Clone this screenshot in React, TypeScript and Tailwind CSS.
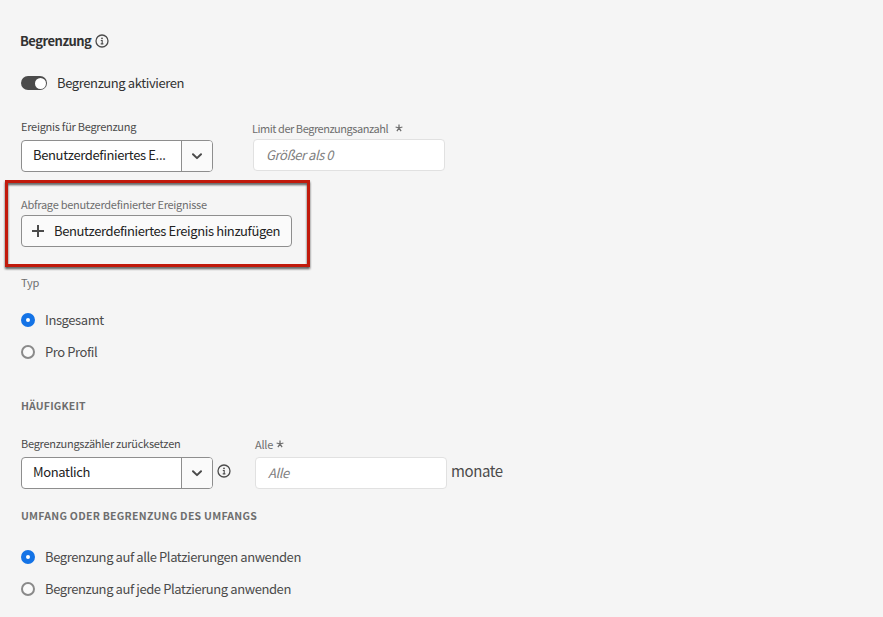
import type { ReactNode } from "react";

function InfoIcon() {
  return (
    <svg width="14" height="14" viewBox="0 0 14 14" fill="none" className="shrink-0">
      <circle cx="7" cy="7" r="6" stroke="#4b4b4b" strokeWidth="1.3" />
      <circle cx="7" cy="4.3" r="0.9" fill="#4b4b4b" />
      <path d="M5.8 6.5H7.2V9.8M5.7 9.9H8.4" stroke="#4b4b4b" strokeWidth="1.1" />
    </svg>
  );
}

function Asterisk() {
  return (
    <svg width="8" height="8" viewBox="0 0 8 8" fill="none" className="shrink-0">
      <path d="M4 4V0.5M4 4L0.6 3M4 4L7.4 3M4 4L1.9 7.2M4 4L6.1 7.2" stroke="#6e6e6e" strokeWidth="1.3" />
    </svg>
  );
}

function Select({ children }: { children: ReactNode }) {
  return (
    <div className="flex h-8 w-48 overflow-hidden rounded border border-[#8e8e8e] bg-white">
      <div className="flex min-w-0 flex-1 items-center pb-[3px] pl-[11px] text-[13px] leading-none tracking-[-0.35px] text-[#222]">
        {children}
      </div>
      <div className="flex w-[31px] shrink-0 items-center justify-center border-l border-[#8e8e8e] bg-[#fafafa]">
        <svg width="10" height="7" viewBox="0 0 10 7" fill="none">
          <path d="M1 1.2L5 5.1L9 1.2" stroke="#4b4b4b" strokeWidth="2" strokeLinecap="round" strokeLinejoin="round" />
        </svg>
      </div>
    </div>
  );
}

function Input({ children }: { children: ReactNode }) {
  return (
    <div className="flex h-8 w-48 items-center rounded border border-[#e1e1e1] bg-white pb-[2px] pl-3 text-[13px] leading-none tracking-[-0.45px] text-[#808080] italic">
      {children}
    </div>
  );
}

function Radio({ checked = false, children }: { checked?: boolean; children: ReactNode }) {
  return (
    <div className="flex h-6 items-center gap-[10px] text-[13px] tracking-[-0.41px] text-[#4b4b4b]">
      <span
        className={
          checked
            ? "size-[14px] rounded-full border-5 border-[#1473e6] bg-white"
            : "size-[14px] rounded-full border-2 border-[#8a8a8a] bg-[#fafafa]"
        }
      />
      {children}
    </div>
  );
}

export default function App() {
  return (
    <main className="h-[617px] w-[883px] overflow-hidden bg-[#f5f5f5] pt-[29px] pl-[21px] font-['Noto_Sans_CJK_SC',sans-serif] whitespace-nowrap">
      <header className="-ml-px flex h-6 items-center gap-1 text-[13px] font-bold tracking-[-0.5px] text-[#323232]">
        <span>Begrenzung</span>
        <InfoIcon />
      </header>

      <div className="mt-[18px] flex h-6 items-center gap-[10px] text-[13px] tracking-[-0.39px] text-[#323232]">
        <span className="flex h-[14px] w-[26px] items-center justify-end rounded-full bg-[#4b4b4b] p-[1.5px]">
          <span className="size-[11px] rounded-full bg-white" />
        </span>
        <span>Begrenzung aktivieren</span>
      </div>

      <div className="mt-[22px] flex h-[55px] gap-10">
        <div>
          <div className="mb-[3px] flex h-5 w-48 items-center pb-[2px] text-[11px] tracking-[-0.27px] text-[#4b4b4b]">
            <span>Ereignis für Begrenzung</span>
          </div>
          <Select><span>Benutzerdefiniertes E...</span></Select>
        </div>
        <div className="pt-[2px]">
          <div className="-ml-px flex h-5 items-center gap-[7px] pb-[2px] text-[11px] tracking-[-0.46px] text-[#6e6e6e]">
            <span>Limit der Begrenzungsanzahl</span>
            <Asterisk />
          </div>
          <Input><span>Größer als 0</span></Input>
        </div>
      </div>

      <section className="relative mt-[23px] h-[52px] w-[271px]">
        <div className="pointer-events-none absolute -top-[15px] -left-4 h-[87px] w-[305px] border-3 border-[#c11a0c] drop-shadow-[0_2px_1px_rgba(0,0,0,0.65)]" />
        <div className="flex h-5 items-center pb-[2px] text-[11px] tracking-[-0.27px] text-[#6e6e6e]">
          <span>Abfrage benutzerdefinierter Ereignisse</span>
        </div>
        <button className="flex h-8 w-[271px] items-center gap-[10px] rounded border border-[#8e8e8e] bg-[#fafafa] pl-[10px] text-[13px] tracking-[-0.39px] text-[#222]">
          <svg width="12" height="12" viewBox="0 0 12 12" fill="none" className="shrink-0">
            <path d="M6 0V12M0 6H12" stroke="#4b4b4b" strokeWidth="2" />
          </svg>
          <span>Benutzerdefiniertes Ereignis hinzufügen</span>
        </button>
      </section>

      <div className="mt-[26px] flex h-5 items-center pb-[2px] text-[11px] tracking-[-0.25px] text-[#6e6e6e]"><span>Typ</span></div>
      <div className="mt-[15px] flex flex-col gap-2">
        <Radio checked><span>Insgesamt</span></Radio>
        <Radio><span>Pro Profil</span></Radio>
      </div>

      <h2 className="mt-8 flex h-5 items-center text-[10.5px] font-bold tracking-[0.15px] text-[#6e6e6e]"><span>HÄUFIGKEIT</span></h2>

      <div className="mt-[18px] flex h-[55px]">
        <div>
          <div className="mb-[3px] flex h-5 w-48 items-center pb-[2px] text-[11px] tracking-[-0.27px] text-[#4b4b4b]">
            <span>Begrenzungszähler zurücksetzen</span>
          </div>
          <Select><span>Monatlich</span></Select>
        </div>
        <div className="mt-[30px] ml-1">
          <InfoIcon />
        </div>
        <div className="ml-6">
          <div className="mb-[3px] flex h-5 items-center gap-[3px] text-[11px] tracking-[-0.25px] text-[#6e6e6e]">
            <span>Alle</span>
            <Asterisk />
          </div>
          <Input><span>Alle</span></Input>
        </div>
        <div className="mt-[25px] ml-1 flex h-6 items-center text-[15px] tracking-[-0.4px] text-[#4b4b4b]"><span>monate</span></div>
      </div>

      <h2 className="mt-[17px] flex h-5 items-center text-[10.5px] font-bold tracking-[0.26px] text-[#6e6e6e]">
        <span>UMFANG ODER BEGRENZUNG DES UMFANGS</span>
      </h2>
      <div className="mt-[19px] flex flex-col gap-2">
        <Radio checked><span>Begrenzung auf alle Platzierungen anwenden</span></Radio>
        <Radio><span>Begrenzung auf jede Platzierung anwenden</span></Radio>
      </div>
    </main>
  );
}
